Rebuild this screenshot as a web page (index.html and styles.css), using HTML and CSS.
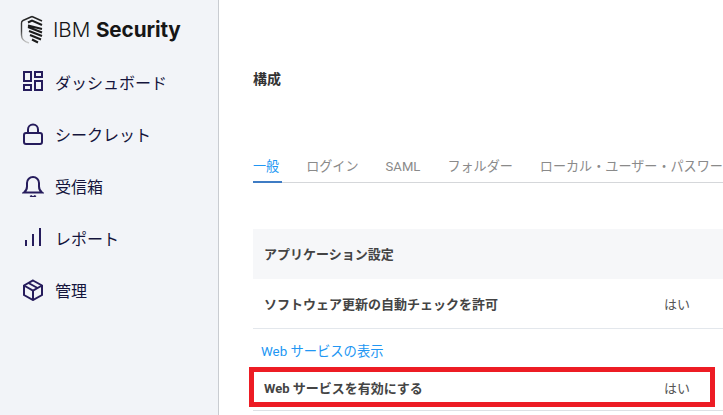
FILE: index.html
```html
<!DOCTYPE html>
<html lang="ja">
<head>
<meta charset="utf-8">
<title>構成</title>
<link rel="stylesheet" href="styles.css">
</head>
<body>
<div class="app">
  <aside class="sidebar">
    <div class="brand">
      <svg class="brand-mark" width="24" height="30" viewBox="0 0 24 30" fill="none">
        <defs><linearGradient id="sg" x1="0" y1="0" x2="0" y2="1"><stop offset="0" stop-color="#222"/><stop offset="0.55" stop-color="#444"/><stop offset="1" stop-color="#ccc"/></linearGradient></defs>
        <path d="M12 1.500 L3 5.500 Q1.500 6.200 1.500 8 V20 Q1.500 26 9 28" stroke="url(#sg)" stroke-width="1.400"/>
        <path d="M12 1.500 L22 6" stroke="#222" stroke-width="1.400"/>
        <path d="M8 7.500 L12 5.500 L22 10 M8 10.500 L22 14 M8 12 L22 17.500 M9 16 L22 21 M10 20 L21 24.500 M12 24.500 L18 27.500" stroke="#1b1b1b" stroke-width="2"/>
      </svg>
      <span class="brand-text">IBM <b>Security</b></span>
    </div>
    <nav class="nav">
      <a class="nav-item">
        <svg width="22" height="22" viewBox="0 0 22 22" fill="none" stroke="#261c5c" stroke-width="2"><rect x="2" y="1" width="7" height="9"/><rect x="13" y="1" width="7" height="5"/><rect x="2" y="14" width="7" height="5"/><rect x="13" y="10" width="7" height="9"/></svg>
        <span>ダッシュボード</span>
      </a>
      <a class="nav-item">
        <svg width="22" height="22" viewBox="0 0 22 22" fill="none" stroke="#261c5c" stroke-width="2"><rect x="2" y="10" width="18" height="11" rx="2"/><path d="M6 10V6.500a5 5 0 0 1 10 0V10"/></svg>
        <span>シークレット</span>
      </a>
      <a class="nav-item">
        <svg width="22" height="22" viewBox="0 0 22 22" fill="none" stroke="#261c5c" stroke-width="2"><path d="M2 17.500c2-1.500 3-3 3-6V8a6 6 0 0 1 12 0v3.500c0 3 1 4.500 3 6z"/><path d="M8.500 20.500a2.800 2.800 0 0 0 5 0"/></svg>
        <span>受信箱</span>
      </a>
      <a class="nav-item">
        <svg width="22" height="22" viewBox="0 0 22 22" fill="none" stroke="#261c5c" stroke-width="2"><path d="M4 19v-6M11 19V7M18 19V1"/></svg>
        <span>レポート</span>
      </a>
      <a class="nav-item">
        <svg width="22" height="22" viewBox="0 0 22 22" fill="none" stroke="#261c5c" stroke-width="2"><path d="M11 1.500l9 5v9.500l-9 5-9-5V6.500z"/><path d="M2 6.500l9 5 9-5M11 11.500V21"/><path d="M6.500 4l9 5"/></svg>
        <span>管理</span>
      </a>
    </nav>
  </aside>
  <main class="main">
    <h1 class="title">構成</h1>
    <div class="tabs">
      <a class="tab tab-active">一般</a>
      <a class="tab">ログイン</a>
      <a class="tab">SAML</a>
      <a class="tab">フォルダー</a>
      <a class="tab">ローカル・ユーザー・パスワー</a>
    </div>
    <section class="table">
      <div class="section-head">アプリケーション設定</div>
      <div class="row row-first">
        <span class="label">ソフトウェア更新の自動チェックを許可</span>
        <span class="value">はい</span>
      </div>
      <a class="link-row">Web サービスの表示</a>
      <div class="row row-last">
        <span class="label">Web サービスを有効にする</span>
        <span class="value">はい</span>
      </div>
      <div class="highlight"></div>
    </section>
  </main>
</div>
</body>
</html>
```

FILE: styles.css
```css
* { box-sizing: border-box; }
html, body { margin: 0; height: 100%; overflow: hidden; background: #fff; }
body { font-family: "Roboto", "Noto Sans CJK JP", sans-serif; }
.app { display: flex; height: 415px; width: 723px; overflow: hidden; }

.sidebar { flex: 0 0 219px; background: #f2f4f8; border-right: 1px solid #c9ccd1; }
.brand { display: flex; align-items: center; gap: 9px; height: 56px; padding: 3px 0 0 20px; }
.brand-mark { flex: none; }
.brand-text { font-family: "Inter", sans-serif; font-size: 20.700px; font-weight: 300; color: #161616; white-space: nowrap; letter-spacing: -0.1px; }
.brand-text b { font-weight: 700; }
.nav { display: flex; flex-direction: column; }
.nav-item { display: flex; align-items: center; gap: 11px; height: 52px; padding-left: 22px; color: #14143c; font-size: 16px; }
.nav-item svg { flex: none; }

.main { flex: 1; min-width: 0; padding: 0 0 0 34px; overflow: hidden; }
.title { margin: 69px 0 0; font-size: 14px; line-height: 20px; font-weight: 700; color: #333; }
.tabs { display: flex; margin-top: 69px; height: 25px; border-bottom: 1px solid #d5d7da; white-space: nowrap; gap: 27px; }
.tab { font-size: 13.100px; line-height: 18px; color: #8a8a8a; height: 25px; }
.tab-active { color: #2196f3; border-bottom: 2px solid #3f7cc4; padding-right: 3px; margin-right: -3px; }

.table { position: relative; margin-top: 46px; }
.section-head { height: 50px; display: flex; align-items: center; padding: 0 0 2px 11px; background: #f6f7f9; font-size: 13px; font-weight: 700; color: #444; }
.row { display: flex; align-items: center; padding-left: 11px; font-size: 13px; border-bottom: 1px solid #e3e7ec; }
.row-first { height: 50px; }
.row-last { height: 43px; padding-bottom: 3px; border-bottom-color: #dde0e4; }
.label { flex: 0 0 400px; font-weight: 700; color: #444; white-space: nowrap; }
.value { font-size: 13px; color: #555; }
.link-row { display: flex; align-items: center; height: 39px; padding: 3px 0 0 8px; font-size: 13.300px; color: #2196f3; }
.highlight { position: absolute; left: -4px; top: 138px; width: 466px; height: 40px; border: 5px solid #ed1c24; }
```
